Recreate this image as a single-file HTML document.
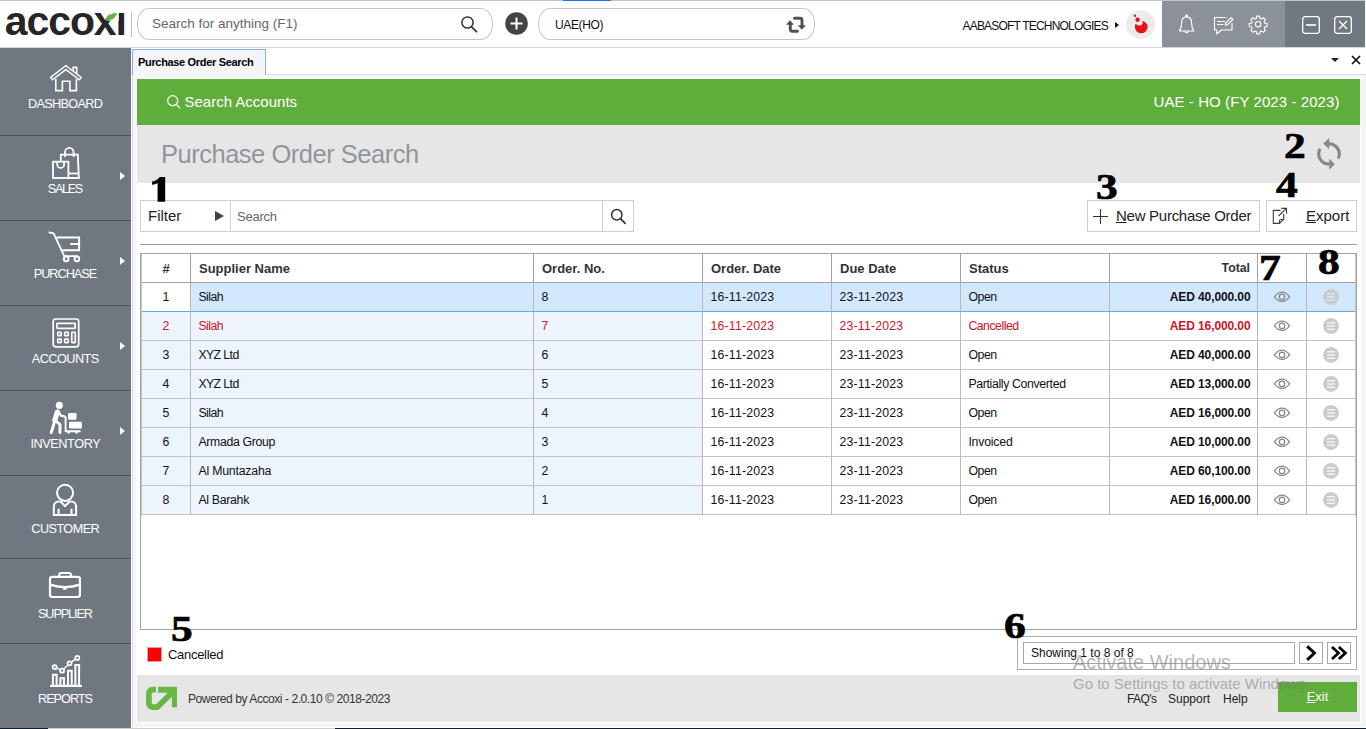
<!DOCTYPE html>
<html><head><meta charset="utf-8"><title>Purchase Order Search</title>
<style>
*{box-sizing:border-box;margin:0;padding:0}
html,body{width:1366px;height:729px;overflow:hidden;background:#fff;font-family:"Liberation Sans",sans-serif;color:#111}
.abs{position:absolute}
svg{position:absolute;overflow:visible}
span.abs{white-space:nowrap}
#top{position:absolute;left:0;top:0;width:1366px;height:48px;background:#fff;border-bottom:1px solid #d9d9d9}
#logo{position:absolute;left:4.8px;top:-3px;font-weight:bold;font-size:41px;letter-spacing:-1.1px;color:#262626;line-height:48px;width:121px;overflow:hidden;white-space:nowrap}
#side{position:absolute;left:0;top:48px;width:131px;height:680px;background:#6f7881}
.mi{position:absolute;left:0;width:131px;color:#fff;text-align:center;font-size:12.7px}
.mi .lb{position:absolute;left:0;width:131px;line-height:16px}
.dv{position:absolute;left:0;width:131px;height:1px;background:#474e55}
.ar{position:absolute;left:120px;width:0;height:0;border-left:5px solid #fff;border-top:4px solid transparent;border-bottom:4px solid transparent}
#sbox{position:absolute;left:137px;top:8px;width:356px;height:32px;border:1px solid #c6c6c6;border-radius:12px/15.500px}
#bbox{position:absolute;left:538px;top:8px;width:277px;height:32px;border:1px solid #c6c6c6;border-radius:12px/15.500px}
#green{position:absolute;left:137px;top:79px;width:1223px;height:46px;background:#5fad3a;color:#fff;font-size:15px}
#band{position:absolute;left:137px;top:125px;width:1223px;height:58px;background:#e6e6e6}
#title{position:absolute;left:161px;top:136.1px;font-size:25.5px;color:#91959c;line-height:36px;letter-spacing:-.49px;white-space:nowrap}
#foot{position:absolute;left:137px;top:675px;width:1223px;height:47px;background:#e6e6e6}
.num{position:absolute;font-family:"Liberation Serif",serif;font-weight:bold;font-size:36.5px;line-height:37px;color:#000;transform-origin:0 0;transform:scaleX(1.19);-webkit-text-stroke:.7px #000}
.btn{position:absolute;top:200px;height:32px;border:1px solid #cfcfcf;background:#fff;font-size:15px;line-height:30px;color:#222}
#tbl{position:absolute;left:140px;top:253px;width:1217px;height:377px;border:1px solid #a2a2a2;background:#fff;padding:0}
#tbl>*{margin-left:1px}
.gs{position:absolute;top:0;width:1px;height:262px;background:#c6c6c6;margin:0 !important}
.hc{position:absolute;top:0;height:28px;border-right:1px solid #a0a0a0;font-weight:bold;font-size:13px;line-height:29px;color:#333;padding-left:8px;white-space:nowrap}
.row{position:absolute;left:0;width:1213px;height:29px;font-size:12.3px;line-height:28px;color:#111}
.c{position:absolute;top:0;height:29px;border-right:1px solid #b9b9b9;border-bottom:1px solid #c2c2c2;padding-left:7.4px;white-space:nowrap;background:#fff}
.t{background:#ecf4fd}
.red,.red .c{color:#cc1526}
.sel .c{background:#d1e8ff;border-bottom-color:#66a5e6}
.sel .c0{background:#fff}
</style></head><body>

<div id="top">
 <div id="logo">accoxı</div>
 <svg style="left:0;top:1px" width="131" height="47" viewBox="0 0 131 47"><path d="M106.300 19.600L110.500 10h8.200v9.600z" fill="#fff"/><path d="M106.500 19.300C107 15 110.500 12 117 12 115.500 17 112 19.800 106.500 19.300z" fill="#5fb63c"/></svg>
 <div class="abs" style="left:131px;top:12px;width:1px;height:25px;background:#bdbdbd"></div>
 <div id="sbox"><span class="abs" style="left:14px;top:7px;font-size:13.5px;color:#666;line-height:16px">Search for anything (F1)</span>
  <svg style="left:322px;top:6px" width="18" height="18" viewBox="0 0 18 18"><circle cx="7.500" cy="7.500" r="5.600" fill="none" stroke="#333" stroke-width="1.500"/><path d="M11.600 11.800 L16.500 16.600" stroke="#333" stroke-width="1.700" stroke-linecap="round"/></svg>
 </div>
 <svg style="left:505px;top:12px" width="23" height="23" viewBox="0 0 23 23"><circle cx="11.500" cy="11.500" r="11.300" fill="#444"/><path d="M11.500 5.500v12M5.500 11.500h12" stroke="#fff" stroke-width="2"/></svg>
 <div id="bbox"><span class="abs" style="left:16px;top:8px;font-size:12px;color:#111;line-height:16px;letter-spacing:-.35px">UAE(HO)</span>
 </div>
 <div class="abs" style="left:0;top:0;width:1366px;height:1px;background:#c4c4c4"></div><div class="abs" style="left:563px;top:0;width:48px;height:1px;background:#1a73e8"></div>
 <span class="abs" style="left:962.5px;top:18px;font-size:12px;line-height:16px;color:#111;letter-spacing:-.8px" id="comp">AABASOFT TECHNOLOGIES</span>
 <div class="abs" style="left:1115px;top:22px;width:0;height:0;border-left:4px solid #111;border-top:3px solid transparent;border-bottom:3px solid transparent"></div>
 <div class="abs" style="left:1126px;top:10px;width:29px;height:29px;border-radius:50%;background:#ececec"></div>
 <svg style="left:1126.100px;top:10.200px" width="29" height="29" viewBox="0 0 29 29"><circle cx="15.200" cy="17" r="6.300" fill="#e8131b"/><circle cx="13.300" cy="12.300" r="3.300" fill="#ececec"/><circle cx="11.600" cy="9.700" r="2.200" fill="#e8131b"/><circle cx="9" cy="5.800" r="1.200" fill="#e8131b"/></svg>
 <div class="abs" style="left:1162px;top:1px;width:123px;height:46px;background:#8a9198"></div>
 <div class="abs" style="left:1285px;top:1px;width:80px;height:46px;background:#707981"></div>
 <svg style="left:1212px;top:15px" width="24" height="22" viewBox="0 0 24 22" fill="none" stroke="#fff" stroke-width="1.150" stroke-linejoin="round" stroke-linecap="round"><path d="M14 2.500H2.500v12.500h2.300v4l4.600-4h10.600V8.500"/><path d="M5.500 6.500h7M5.500 9.500h5.500"/><path d="M13.200 10.300l.6-2.400 5.200-5.200 1.800 1.800-5.200 5.200z"/></svg>
 <svg style="left:1248.350px;top:14.250px" width="20.300" height="20.300" viewBox="0 0 24 24" fill="none" stroke="#fff" stroke-width="1.300" stroke-linejoin="round"><circle cx="12" cy="12" r="3.200"/><path d="M10.300 2.500h3.400l.5 2.700 1.700.7 2.300-1.500 2.400 2.400-1.500 2.300.7 1.700 2.700.5v3.400l-2.700.5-.7 1.700 1.500 2.300-2.400 2.400-2.300-1.500-1.700.7-.5 2.700h-3.400l-.5-2.700-1.700-.7-2.300 1.500-2.400-2.400 1.500-2.300-.7-1.700-2.700-.5v-3.400l2.700-.5.700-1.700-1.500-2.300 2.400-2.400 2.300 1.500 1.700-.7z"/></svg>
 <svg style="left:1302px;top:16px" width="18" height="18" viewBox="0 0 18 18" fill="none" stroke="#fff" stroke-width="1.300"><rect x=".7" y=".7" width="16.600" height="16.600" rx="2.500"/><path d="M4 9h10" stroke-width="1.600"/></svg>
 <svg style="left:1334px;top:16px" width="18" height="18" viewBox="0 0 18 18" fill="none" stroke="#fff" stroke-width="1.300"><rect x=".7" y=".7" width="16.600" height="16.600" rx="2.500"/><path d="M5 5l8 8M13 5l-8 8"/></svg>
</div>
<div id="side">
<div class="mi" style="top:0px;height:85px"><svg style="left:0;top:0" width="131" height="85" viewBox="0 48 131 85"><g fill="none" stroke="#fff" stroke-width="1.600"><path d="M55.800 79V90.600H62.400V81.200H69.900V90.600H76.400V79"/><path d="M73.200 72.500V67.400H76.700V75"/><path d="M51 79L65.900 67.600L80.900 79" stroke-width="4.500"/><path d="M52.200 78.100L65.900 67.600L79.700 78.100" stroke="#6f7881" stroke-width="1.700"/></g></svg><div class="lb" style="top:47.8px;letter-spacing:-0.67px;left:-0.33px">DASHBOARD</div></div>
<div class="mi" style="top:88px;height:85px"><svg style="left:0;top:0" width="131" height="85" viewBox="0 136 131 85"><g fill="none" stroke="#fff" stroke-width="1.800"><rect x="53" y="161.700" width="15.400" height="16.300"/><path d="M57.200 161.700V164.500A3.450 3.450 0 0 0 64.100 164.500V161.700"/><path d="M60.800 161V154.650H77.800L78.900 178H68.400"/><path d="M68.400 173.500H78.600"/><path d="M65 156.900V152.100A4.300 4.300 0 0 1 73.600 152.100V156.900"/></g></svg><div class="lb" style="top:44.6px;letter-spacing:-1.39px;left:-0.69px">SALES</div><div class="ar" style="top:35.500px"></div></div>
<div class="mi" style="top:173px;height:85px"><svg style="left:0;top:0" width="131" height="85" viewBox="0 221 131 85"><g fill="none" stroke="#fff" stroke-width="2" stroke-linecap="round" stroke-linejoin="round"><path d="M49.400 232.500L53.600 233.300L64.300 256.200H77" stroke-width="1.800"/><path d="M56.400 237.400H79.100V250.300H62.600" stroke-linecap="butt" stroke-linejoin="miter"/><path d="M71 244H79.100"/><circle cx="66.200" cy="258.900" r="2.300"/><circle cx="76.900" cy="258.900" r="2.300"/></g></svg><div class="lb" style="top:44.6px;letter-spacing:-0.99px;left:-0.50px">PURCHASE</div><div class="ar" style="top:35.500px"></div></div>
<div class="mi" style="top:258px;height:85px"><svg style="left:0;top:0" width="131" height="85" viewBox="0 306 131 85"><g fill="none" stroke="#fff" stroke-width="1.700"><rect x="53.200" y="319" width="25.500" height="27.800" rx="2.600"/><rect x="56.900" y="323.400" width="18.300" height="4.900" rx=".6"/><rect x="57.750" y="332.250" width="3.400" height="3.400" rx=".5"/><rect x="64.650" y="332.250" width="3.600" height="3.400" rx=".5"/><rect x="57.750" y="339.150" width="3.400" height="3.400" rx=".5"/><rect x="64.650" y="339.150" width="3.600" height="3.400" rx=".5"/><rect x="71.750" y="332.250" width="3.500" height="10.300" rx=".5"/></g></svg><div class="lb" style="top:44.6px;letter-spacing:-0.54px;left:-0.27px">ACCOUNTS</div><div class="ar" style="top:35.500px"></div></div>
<div class="mi" style="top:343px;height:85px"><svg style="left:0;top:0" width="131" height="85" viewBox="0 391 131 85"><g fill="none" stroke="#fff" stroke-linecap="round" stroke-linejoin="round"><circle cx="59.300" cy="405.400" r="3.550" fill="#fff" stroke="none"/><path d="M57.300 412L54.800 420.300" stroke-width="5"/><path d="M58.800 411.600L60.800 415.600L64.400 416.400" stroke-width="2.200"/><path d="M54.600 421.500L51.300 432.500" stroke-width="2.900"/><path d="M56 421L60.100 424.800L59.900 432.600" stroke-width="2.900"/><path d="M65.600 417.200V431.200H79.800" stroke-width="1.900"/><circle cx="68.600" cy="432.500" r="1.300" fill="#fff" stroke="none"/><circle cx="76.500" cy="432.500" r="1.300" fill="#fff" stroke="none"/><rect x="68" y="413.100" width="8.500" height="6.600" rx="1.200" fill="#fff" stroke="none"/><rect x="69" y="421.800" width="12.900" height="6.700" rx="1.200" fill="#fff" stroke="none"/></g></svg><div class="lb" style="top:44.6px;letter-spacing:-0.41px;left:-0.20px">INVENTORY</div><div class="ar" style="top:35.500px"></div></div>
<div class="mi" style="top:428px;height:85px"><svg style="left:0;top:0" width="131" height="85" viewBox="0 476 131 85"><g fill="none" stroke="#fff" stroke-width="2"><circle cx="65.050" cy="492.850" r="8.050"/><path d="M59.500 501.600H58.800A5 5 0 0 0 53.800 506.600V514.900H76.100V506.600A5 5 0 0 0 71.100 501.600H70.500"/><path d="M59.900 501L65 506.200L70.200 501"/><path d="M58.600 508.800V514.900M71.500 508.800V514.900"/></g></svg><div class="lb" style="top:44.6px;letter-spacing:-0.56px;left:-0.28px">CUSTOMER</div></div>
<div class="mi" style="top:511px;height:85px"><svg style="left:0;top:0" width="131" height="85" viewBox="0 559 131 85"><g fill="none" stroke="#fff" stroke-width="2.200"><rect x="50" y="576.800" width="29.900" height="20.200" rx="2.200"/><path d="M59.200 576.800V575A2 2 0 0 1 61.200 573H68.900A2 2 0 0 1 70.900 575V576.800"/><path d="M50 584.600Q65 589.600 79.900 584.600"/><rect x="62.900" y="586.500" width="3.900" height="3.300" rx="1" fill="#fff" stroke="none"/></g></svg><div class="lb" style="top:46.6px;letter-spacing:-1.10px;left:-0.55px">SUPPLIER</div></div>
<div class="mi" style="top:596px;height:85px"><svg style="left:0;top:0" width="131" height="85" viewBox="0 644 131 85"><g fill="none" stroke="#fff" stroke-width="2"><path d="M50 685.900H81.900" stroke-width="2.200"/><path d="M52.900 685V674.700H56.600V685M60.400 685V678.300H64V685M68 685V670.800H71.700V685M75.400 685V665.100H79.100V685"/><path d="M54.650 667.100L62.100 670.700L69.550 663.300L77.300 657.900" stroke-width="1.500"/><g fill="#6f7881" stroke-width="1.800"><circle cx="54.650" cy="667.100" r="2"/><circle cx="62.100" cy="670.700" r="2"/><circle cx="69.550" cy="663.300" r="2"/><circle cx="77.300" cy="657.900" r="2"/></g></g></svg><div class="lb" style="top:46.7px;letter-spacing:-1.02px;left:-0.51px">REPORTS</div></div>
<div class="dv" style="top:87px"></div>
<div class="dv" style="top:172px"></div>
<div class="dv" style="top:257px"></div>
<div class="dv" style="top:342px"></div>
<div class="dv" style="top:427px"></div>
<div class="dv" style="top:510px"></div>
<div class="dv" style="top:595px"></div>
</div>

<div class="abs" style="left:131px;top:74px;width:1235px;height:1px;background:#dcdee0"></div>
<div class="abs" style="left:132px;top:49px;width:134px;height:26px;background:#f4f5f8;border:1px solid #7eb0ea;border-bottom:none"></div>
<div class="abs" style="left:132px;top:75px;width:1234px;height:652px;background:#f4f5f7;border-left:1px solid #dcdee0"></div><div class="abs" style="left:136px;top:78px;width:1225px;height:645px;background:#fff"></div>
<span class="abs" id="tabt" style="left:138px;top:54px;font-size:11px;font-weight:bold;line-height:16px;color:#000;letter-spacing:-.33px">Purchase Order Search</span>
<div class="abs" style="left:1331px;top:58px;width:0;height:0;border-top:4px solid #222;border-left:4px solid transparent;border-right:4px solid transparent"></div>
<svg style="left:1351px;top:55px" width="10" height="10" viewBox="0 0 10 10"><path d="M1 1l8 8M9 1l-8 8" stroke="#111" stroke-width="1.700"/></svg>
<div id="green">
 <svg style="left:30px;top:16px" width="14" height="14" viewBox="0 0 14 14"><circle cx="5.700" cy="5.700" r="5" fill="none" stroke="#fff" stroke-width="1.200"/><path d="M9.300 9.400l4 4" stroke="#fff" stroke-width="1.300"/></svg>
 <span class="abs" id="sa" style="left:47.500px;top:13px;line-height:20px">Search Accounts</span>
 <span class="abs" id="fy" style="right:20.500px;top:13px;line-height:20px;letter-spacing:.08px">UAE - HO (FY 2023 - 2023)</span>
</div>
<div id="band"></div>
<div id="title">Purchase Order Search</div>
<svg style="left:1314px;top:138px" width="30" height="32" viewBox="0 0 30 32" fill="none" stroke="#85888c" stroke-width="3.200"><path d="M15 5.800A10.200 10.200 0 0 1 24.200 20.500"/><path d="M15 26.200A10.200 10.200 0 0 1 6.200 10.800"/><path d="M15.200 0v11.200L9.300 5.600z" fill="#85888c" stroke="none"/><path d="M15.200 20.600v11.200l5.600-5.600z" fill="#85888c" stroke="none"/></svg>
<div class="abs" style="left:140px;top:200px;width:494px;height:32px;border:1px solid #cfcfcf;background:#fff"></div>
<div class="abs" style="left:230px;top:200px;width:1px;height:32px;background:#cfcfcf"></div>
<div class="abs" style="left:602px;top:200px;width:1px;height:32px;background:#cfcfcf"></div>
<span class="abs" id="flt" style="left:148px;top:207px;font-size:15px;line-height:18px;color:#222">Filter</span>
<div class="abs" style="left:215px;top:211px;width:0;height:0;border-left:9px solid #444;border-top:5px solid transparent;border-bottom:5px solid transparent"></div>
<span class="abs" id="srch" style="left:237px;top:208px;font-size:13px;line-height:17px;color:#666;letter-spacing:-.25px">Search</span>
<svg style="left:610px;top:208px" width="17" height="17" viewBox="0 0 17 17"><circle cx="6.800" cy="6.800" r="5.200" fill="none" stroke="#333" stroke-width="1.500"/><path d="M10.600 10.800l4.600 4.600" stroke="#333" stroke-width="1.700" stroke-linecap="round"/></svg>
<div class="btn" style="left:1087px;width:173px"><svg style="left:5px;top:8px" width="15" height="15" viewBox="0 0 15 15"><path d="M7.500 0v15M0 7.500h15" stroke="#333" stroke-width="1.100"/></svg><span class="abs" id="npo" style="left:28px;top:0;letter-spacing:-.27px"><u>N</u>ew Purchase Order</span></div>
<div class="btn" style="left:1266px;width:91px"><span class="abs" id="exp" style="left:39px;top:0"><u>E</u>xport</span></div>
<div class="abs" style="left:140px;top:244px;width:1217px;height:1px;background:#a0a0a0"></div>
<div id="tbl">
<div class="gs" style="left:0"></div><div class="gs" style="left:1214px"></div>
<div class="hc" style="left:0px;width:49px;text-align:center;padding-left:0;">#</div><div class="hc" style="left:49px;width:343px;">Supplier Name</div><div class="hc" style="left:392px;width:169px;">Order. No.</div><div class="hc" style="left:561px;width:129px;">Order. Date</div><div class="hc" style="left:690px;width:129px;">Due Date</div><div class="hc" style="left:819px;width:149px;">Status</div><div class="hc" style="left:968px;width:148px;text-align:right;padding-right:7px;font-size:12.3px;">Total</div><div class="hc" style="left:1116px;width:49px;"></div><div class="hc" style="left:1165px;width:48px;border-right:none;"></div>
<div class="abs" style="left:0;top:28px;width:1213px;height:1px;background:#a0a0a0"></div>
<div class="row sel" style="top:29px"><div class="c c0 t" style="left:0px;width:49px;text-align:center;padding-left:0;">1</div><div class="c t" style="left:49px;width:343px;letter-spacing:-0.55px;">Silah</div><div class="c t" style="left:392px;width:169px;">8</div><div class="c" style="left:561px;width:129px;letter-spacing:0.20px;">16-11-2023</div><div class="c" style="left:690px;width:129px;letter-spacing:0.20px;">23-11-2023</div><div class="c" style="left:819px;width:149px;letter-spacing:-0.45px;">Open</div><div class="c" style="left:968px;width:148px;text-align:right;padding-right:6.500px;font-weight:bold;font-size:12px;letter-spacing:-.1px;">AED 40,000.00</div><div class="c" style="left:1116px;width:49px;padding:0;"><svg style="left:0;top:0" width="48" height="28" viewBox="-24 -13.8 48 28" fill="none" stroke="#868686" stroke-width="1.200"><path d="M-7.600 0C-5 -3.300 -2.600 -4.600 0 -4.600S5 -3.300 7.600 0C5 3.300 2.600 4.600 0 4.600S-5 3.300 -7.600 0Z"/><circle cx="0" cy="0.100" r="2.700"/></svg></div><div class="c" style="left:1165px;width:48px;padding:0;border-right:none;"><svg style="left:0;top:0" width="48" height="28" viewBox="-24 -14 48 28"><circle cx="0" cy="0" r="7.950" fill="#cbcbcb"/><path d="M-4 -3.300h8M-4 0h8M-4 3.200h8" stroke="#d6e8fb" stroke-width="1.600"/></svg></div></div>
<div class="row red" style="top:58px"><div class="c c0 t" style="left:0px;width:49px;text-align:center;padding-left:0;">2</div><div class="c t" style="left:49px;width:343px;letter-spacing:-0.55px;">Silah</div><div class="c t" style="left:392px;width:169px;">7</div><div class="c" style="left:561px;width:129px;letter-spacing:0.20px;">16-11-2023</div><div class="c" style="left:690px;width:129px;letter-spacing:0.20px;">23-11-2023</div><div class="c" style="left:819px;width:149px;letter-spacing:-0.50px;">Cancelled</div><div class="c" style="left:968px;width:148px;text-align:right;padding-right:6.500px;font-weight:bold;font-size:12px;letter-spacing:-.1px;">AED 16,000.00</div><div class="c" style="left:1116px;width:49px;padding:0;"><svg style="left:0;top:0" width="48" height="28" viewBox="-24 -13.8 48 28" fill="none" stroke="#868686" stroke-width="1.200"><path d="M-7.600 0C-5 -3.300 -2.600 -4.600 0 -4.600S5 -3.300 7.600 0C5 3.300 2.600 4.600 0 4.600S-5 3.300 -7.600 0Z"/><circle cx="0" cy="0.100" r="2.700"/></svg></div><div class="c" style="left:1165px;width:48px;padding:0;border-right:none;"><svg style="left:0;top:0" width="48" height="28" viewBox="-24 -14 48 28"><circle cx="0" cy="0" r="7.950" fill="#cbcbcb"/><path d="M-4 -3.300h8M-4 0h8M-4 3.200h8" stroke="#f3f3f3" stroke-width="1.600"/></svg></div></div>
<div class="row" style="top:87px"><div class="c c0 t" style="left:0px;width:49px;text-align:center;padding-left:0;">3</div><div class="c t" style="left:49px;width:343px;letter-spacing:-0.60px;">XYZ Ltd</div><div class="c t" style="left:392px;width:169px;">6</div><div class="c" style="left:561px;width:129px;letter-spacing:0.20px;">16-11-2023</div><div class="c" style="left:690px;width:129px;letter-spacing:0.20px;">23-11-2023</div><div class="c" style="left:819px;width:149px;letter-spacing:-0.45px;">Open</div><div class="c" style="left:968px;width:148px;text-align:right;padding-right:6.500px;font-weight:bold;font-size:12px;letter-spacing:-.1px;">AED 40,000.00</div><div class="c" style="left:1116px;width:49px;padding:0;"><svg style="left:0;top:0" width="48" height="28" viewBox="-24 -13.8 48 28" fill="none" stroke="#868686" stroke-width="1.200"><path d="M-7.600 0C-5 -3.300 -2.600 -4.600 0 -4.600S5 -3.300 7.600 0C5 3.300 2.600 4.600 0 4.600S-5 3.300 -7.600 0Z"/><circle cx="0" cy="0.100" r="2.700"/></svg></div><div class="c" style="left:1165px;width:48px;padding:0;border-right:none;"><svg style="left:0;top:0" width="48" height="28" viewBox="-24 -14 48 28"><circle cx="0" cy="0" r="7.950" fill="#cbcbcb"/><path d="M-4 -3.300h8M-4 0h8M-4 3.200h8" stroke="#f3f3f3" stroke-width="1.600"/></svg></div></div>
<div class="row" style="top:116px"><div class="c c0 t" style="left:0px;width:49px;text-align:center;padding-left:0;">4</div><div class="c t" style="left:49px;width:343px;letter-spacing:-0.60px;">XYZ Ltd</div><div class="c t" style="left:392px;width:169px;">5</div><div class="c" style="left:561px;width:129px;letter-spacing:0.20px;">16-11-2023</div><div class="c" style="left:690px;width:129px;letter-spacing:0.20px;">23-11-2023</div><div class="c" style="left:819px;width:149px;letter-spacing:-0.35px;">Partially Converted</div><div class="c" style="left:968px;width:148px;text-align:right;padding-right:6.500px;font-weight:bold;font-size:12px;letter-spacing:-.1px;">AED 13,000.00</div><div class="c" style="left:1116px;width:49px;padding:0;"><svg style="left:0;top:0" width="48" height="28" viewBox="-24 -13.8 48 28" fill="none" stroke="#868686" stroke-width="1.200"><path d="M-7.600 0C-5 -3.300 -2.600 -4.600 0 -4.600S5 -3.300 7.600 0C5 3.300 2.600 4.600 0 4.600S-5 3.300 -7.600 0Z"/><circle cx="0" cy="0.100" r="2.700"/></svg></div><div class="c" style="left:1165px;width:48px;padding:0;border-right:none;"><svg style="left:0;top:0" width="48" height="28" viewBox="-24 -14 48 28"><circle cx="0" cy="0" r="7.950" fill="#cbcbcb"/><path d="M-4 -3.300h8M-4 0h8M-4 3.200h8" stroke="#f3f3f3" stroke-width="1.600"/></svg></div></div>
<div class="row" style="top:145px"><div class="c c0 t" style="left:0px;width:49px;text-align:center;padding-left:0;">5</div><div class="c t" style="left:49px;width:343px;letter-spacing:-0.55px;">Silah</div><div class="c t" style="left:392px;width:169px;">4</div><div class="c" style="left:561px;width:129px;letter-spacing:0.20px;">16-11-2023</div><div class="c" style="left:690px;width:129px;letter-spacing:0.20px;">23-11-2023</div><div class="c" style="left:819px;width:149px;letter-spacing:-0.45px;">Open</div><div class="c" style="left:968px;width:148px;text-align:right;padding-right:6.500px;font-weight:bold;font-size:12px;letter-spacing:-.1px;">AED 16,000.00</div><div class="c" style="left:1116px;width:49px;padding:0;"><svg style="left:0;top:0" width="48" height="28" viewBox="-24 -13.8 48 28" fill="none" stroke="#868686" stroke-width="1.200"><path d="M-7.600 0C-5 -3.300 -2.600 -4.600 0 -4.600S5 -3.300 7.600 0C5 3.300 2.600 4.600 0 4.600S-5 3.300 -7.600 0Z"/><circle cx="0" cy="0.100" r="2.700"/></svg></div><div class="c" style="left:1165px;width:48px;padding:0;border-right:none;"><svg style="left:0;top:0" width="48" height="28" viewBox="-24 -14 48 28"><circle cx="0" cy="0" r="7.950" fill="#cbcbcb"/><path d="M-4 -3.300h8M-4 0h8M-4 3.200h8" stroke="#f3f3f3" stroke-width="1.600"/></svg></div></div>
<div class="row" style="top:174px"><div class="c c0 t" style="left:0px;width:49px;text-align:center;padding-left:0;">6</div><div class="c t" style="left:49px;width:343px;letter-spacing:-0.33px;">Armada Group</div><div class="c t" style="left:392px;width:169px;">3</div><div class="c" style="left:561px;width:129px;letter-spacing:0.20px;">16-11-2023</div><div class="c" style="left:690px;width:129px;letter-spacing:0.20px;">23-11-2023</div><div class="c" style="left:819px;width:149px;letter-spacing:-0.20px;">Invoiced</div><div class="c" style="left:968px;width:148px;text-align:right;padding-right:6.500px;font-weight:bold;font-size:12px;letter-spacing:-.1px;">AED 10,000.00</div><div class="c" style="left:1116px;width:49px;padding:0;"><svg style="left:0;top:0" width="48" height="28" viewBox="-24 -13.8 48 28" fill="none" stroke="#868686" stroke-width="1.200"><path d="M-7.600 0C-5 -3.300 -2.600 -4.600 0 -4.600S5 -3.300 7.600 0C5 3.300 2.600 4.600 0 4.600S-5 3.300 -7.600 0Z"/><circle cx="0" cy="0.100" r="2.700"/></svg></div><div class="c" style="left:1165px;width:48px;padding:0;border-right:none;"><svg style="left:0;top:0" width="48" height="28" viewBox="-24 -14 48 28"><circle cx="0" cy="0" r="7.950" fill="#cbcbcb"/><path d="M-4 -3.300h8M-4 0h8M-4 3.200h8" stroke="#f3f3f3" stroke-width="1.600"/></svg></div></div>
<div class="row" style="top:203px"><div class="c c0 t" style="left:0px;width:49px;text-align:center;padding-left:0;">7</div><div class="c t" style="left:49px;width:343px;letter-spacing:-0.20px;">Al Muntazaha</div><div class="c t" style="left:392px;width:169px;">2</div><div class="c" style="left:561px;width:129px;letter-spacing:0.20px;">16-11-2023</div><div class="c" style="left:690px;width:129px;letter-spacing:0.20px;">23-11-2023</div><div class="c" style="left:819px;width:149px;letter-spacing:-0.45px;">Open</div><div class="c" style="left:968px;width:148px;text-align:right;padding-right:6.500px;font-weight:bold;font-size:12px;letter-spacing:-.1px;">AED 60,100.00</div><div class="c" style="left:1116px;width:49px;padding:0;"><svg style="left:0;top:0" width="48" height="28" viewBox="-24 -13.8 48 28" fill="none" stroke="#868686" stroke-width="1.200"><path d="M-7.600 0C-5 -3.300 -2.600 -4.600 0 -4.600S5 -3.300 7.600 0C5 3.300 2.600 4.600 0 4.600S-5 3.300 -7.600 0Z"/><circle cx="0" cy="0.100" r="2.700"/></svg></div><div class="c" style="left:1165px;width:48px;padding:0;border-right:none;"><svg style="left:0;top:0" width="48" height="28" viewBox="-24 -14 48 28"><circle cx="0" cy="0" r="7.950" fill="#cbcbcb"/><path d="M-4 -3.300h8M-4 0h8M-4 3.200h8" stroke="#f3f3f3" stroke-width="1.600"/></svg></div></div>
<div class="row" style="top:232px"><div class="c c0 t" style="left:0px;width:49px;text-align:center;padding-left:0;">8</div><div class="c t" style="left:49px;width:343px;letter-spacing:-0.30px;">Al Barahk</div><div class="c t" style="left:392px;width:169px;">1</div><div class="c" style="left:561px;width:129px;letter-spacing:0.20px;">16-11-2023</div><div class="c" style="left:690px;width:129px;letter-spacing:0.20px;">23-11-2023</div><div class="c" style="left:819px;width:149px;letter-spacing:-0.45px;">Open</div><div class="c" style="left:968px;width:148px;text-align:right;padding-right:6.500px;font-weight:bold;font-size:12px;letter-spacing:-.1px;">AED 16,000.00</div><div class="c" style="left:1116px;width:49px;padding:0;"><svg style="left:0;top:0" width="48" height="28" viewBox="-24 -13.8 48 28" fill="none" stroke="#868686" stroke-width="1.200"><path d="M-7.600 0C-5 -3.300 -2.600 -4.600 0 -4.600S5 -3.300 7.600 0C5 3.300 2.600 4.600 0 4.600S-5 3.300 -7.600 0Z"/><circle cx="0" cy="0.100" r="2.700"/></svg></div><div class="c" style="left:1165px;width:48px;padding:0;border-right:none;"><svg style="left:0;top:0" width="48" height="28" viewBox="-24 -14 48 28"><circle cx="0" cy="0" r="7.950" fill="#cbcbcb"/><path d="M-4 -3.300h8M-4 0h8M-4 3.200h8" stroke="#f3f3f3" stroke-width="1.600"/></svg></div></div>
</div>

<div class="abs" style="left:147px;top:647px;width:15px;height:15px;background:#ff0000;border:1px solid #e0a0a0"></div>
<span class="abs" id="canc" style="left:168px;top:647px;font-size:13px;line-height:16px;color:#111;letter-spacing:-.3px">Cancelled</span>
<div class="abs" style="left:1017px;top:636px;width:340px;height:34px;border:1px solid #ababab;background:#fff"></div>
<div class="abs" style="left:1023px;top:642px;width:272px;height:22px;border:1px solid #a8a8a8;background:#fff"></div>
<span class="abs" id="shw" style="left:1031px;top:645px;font-size:12px;line-height:16px;color:#111">Showing 1 to 8 of 8</span>
<div class="abs" style="left:1299px;top:642px;width:24px;height:22px;border:1px solid #a8a8a8;background:#fff"></div>
<div class="abs" style="left:1327px;top:642px;width:24px;height:22px;border:1px solid #a8a8a8;background:#fff"></div>
<div id="foot">
 <span class="abs" id="pw" style="left:51px;top:16px;font-size:12px;line-height:16px;color:#333;letter-spacing:-.43px">Powered by Accoxi - 2.0.10 © 2018-2023</span>
 <span class="abs" id="faq" style="left:990px;top:16px;font-size:12px;line-height:16px;color:#222;letter-spacing:-.6px">FAQ's</span>
 <span class="abs" id="sup" style="left:1031px;top:16px;font-size:12px;line-height:16px;color:#222">Support</span>
 <span class="abs" id="hlp" style="left:1086px;top:16px;font-size:12px;line-height:16px;color:#222">Help</span>
 <div class="abs" style="left:1141px;top:7px;width:79px;height:30px;background:#5fad3a;color:#fff;font-size:13px;line-height:29px;text-align:center"><u>E</u>xit</div>
</div>
<div class="abs" id="aw1" style="left:1073px;top:650px;font-size:20px;line-height:24px;color:rgba(120,120,120,.55);white-space:nowrap">Activate Windows</div>
<div class="abs" id="aw2" style="left:1073px;top:674px;font-size:15px;line-height:20px;color:rgba(120,120,120,.55);white-space:nowrap">Go to Settings to activate Windows.</div>
<svg style="left:0;top:0" width="1366" height="729" viewBox="0 0 1366 729"><path d="M165.200 176.900V201.800H157.600V183C156 184 154 184.600 152.200 184.900L152 181.500C155.500 180.800 158 179.200 159.800 176.900Z" fill="#000"/>
<path d="M156 689.700H152.500A3.600 3.600 0 0 0 148.900 693.300V703.400A3.800 3.800 0 0 0 152.700 707.200H157.300L172 692.500" fill="none" stroke="#66b842" stroke-width="5.700" stroke-linejoin="round"/><path d="M158.100 686.800H177V707.300H171.900V692.700H158.100Z" fill="#66b842"/>
<g fill="none" stroke="#505050" stroke-width="2.900" stroke-linecap="round"><path d="M794.500 18.300H800Q802 18.300 802 20.300V25.500"/><path d="M797.500 31.200H792.300Q790.300 31.200 790.300 29.200V24.500"/></g><path d="M797.800 25.200H805.900L801.850 29.700ZM786 24.700H794L790 20.300Z" fill="#505050"/>
<g fill="none" stroke="#000"><path d="M1307.200 646.300L1314.400 653L1307.200 659.800" stroke-width="3"/><path d="M1332 647L1338.500 653L1332 659M1338.900 647L1345.400 653L1338.900 659" stroke-width="2.800"/></g>
<g fill="none" stroke="#3c3c3c" stroke-width="1.100"><path d="M1280.500 210.400H1273.300V223.400H1279.500L1283.700 219.200V214"/><path d="M1279.500 223.400V221Q1279.500 219.600 1281 219.500L1283.700 219.200"/><path d="M1278.500 216L1286.500 208.400M1281.300 208.400H1286.500V213.800"/></g>
<g fill="none" stroke="#fff" stroke-width="1.150" stroke-linejoin="round" stroke-linecap="round"><path d="M1186.600 16.900C1182.800 16.900 1181.600 20 1181.600 23C1181.600 27 1180.600 29.200 1179.400 31H1193.800C1192.600 29.200 1191.600 27 1191.600 23C1191.600 20 1190.400 16.900 1186.600 16.900Z"/><circle cx="1186.600" cy="16" r=".9"/><path d="M1184.800 31.400A1.900 1.900 0 0 0 1188.400 31.400"/></g></svg>
<div class="num" id="n2" style="left:1283.7px;top:126.5px">2</div>
<div class="num" id="n3" style="left:1095.6px;top:168px">3</div>
<div class="num" id="n4" style="left:1276px;top:165.7px">4</div>
<div class="num" id="n5" style="left:170.5px;top:609.5px">5</div>
<div class="num" id="n6" style="left:1003.7px;top:607px">6</div>
<div class="num" id="n7" style="left:1258.5px;top:248.7px">7</div>
<div class="num" id="n8" style="left:1318px;top:243px">8</div>
<div class="abs" style="left:0;top:728px;width:48px;height:1px;background:#121d30"></div>
<div class="abs" style="left:48px;top:728px;width:287px;height:1px;background:#cfcfcf"></div>
<div class="abs" style="left:335px;top:728px;width:1031px;height:1px;background:#121d30"></div>
</body></html>
